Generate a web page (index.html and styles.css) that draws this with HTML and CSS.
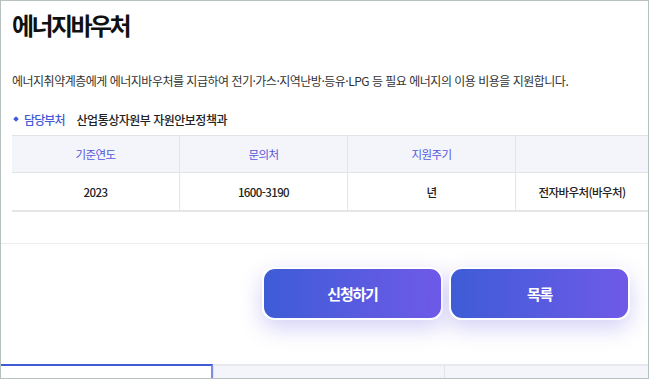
FILE: index.html
```html
<!DOCTYPE html>
<html lang="ko">
<head>
  <meta charset="UTF-8" />
  <meta name="viewport" content="width=device-width, initial-scale=1.0"/>
  <title>에너지바우처</title>
  <link rel="stylesheet" href="styles.css">
</head>
<body>
  <div class="frame">
    <h2 class="title">에너지바우처</h2>

    <p class="desc">에너지취약계층에게 에너지바우처를 지급하여 전기·가스·지역난방·등유·LPG 등 필요 에너지의 이용 비용을 지원합니다.</p>

    <div class="dept">
      <span class="dot"></span>
      <span class="dept-label">담당부처</span>
      <span class="dept-name">산업통상자원부 자원안보정책과</span>
    </div>

    <div class="info">
      <div class="info-row head">
        <div class="cell">기준연도</div>
        <div class="cell">문의처</div>
        <div class="cell">지원주기</div>
        <div class="cell"></div>
      </div>
      <div class="info-row body">
        <div class="cell">2023</div>
        <div class="cell">1600-3190</div>
        <div class="cell">년</div>
        <div class="cell">전자바우처(바우처)</div>
      </div>
    </div>

    <div class="actions">
      <button type="button" class="btn">신청하기</button>
      <button type="button" class="btn">목록</button>
    </div>

    <div class="tabs">
      <div class="tab active"></div>
      <div class="tab"></div>
      <div class="tab"></div>
    </div>
  </div>
</body>
</html>
```

FILE: styles.css
```css
body { margin: 0; background: #fff; font-family: "Noto Sans CJK KR", "Noto Sans", sans-serif; }
.frame { width: 649px; height: 379px; box-sizing: border-box; border: 1px solid #b9c0c0; overflow: hidden; display: flex; flex-direction: column; }
.title { margin: 8px 0 0 11px; font-size: 24px; line-height: 32px; font-weight: 700; letter-spacing: -2.6px; color: #111; }
.desc { margin: 31px 0 0 11px; font-size: 12px; line-height: 18px; letter-spacing: -0.5px; color: #333; }
.dept { margin: 20px 0 0 11px; display: flex; align-items: center; height: 18px; font-size: 12px; letter-spacing: -0.9px; }
.dot { width: 4px; height: 4px; background: #3f5bd6; transform: rotate(45deg); margin: 0 6px 0 2px; }
.dept-label { color: #3f5bd6; font-weight: 500; margin-right: 12px; }
.dept-name { color: #222; font-weight: 500; letter-spacing: -0.5px; }
.info { margin: 7px 0 0 11px; font-size: 11.5px; letter-spacing: -0.6px; }
.info-row { display: grid; grid-template-columns: 167px 168px 168px 1fr; }
.info-row .cell { display: flex; align-items: center; justify-content: center; }
.info-row .cell + .cell { border-left: 1px solid #e4e5ea; }
.head { height: 36px; background: #f4f5fa; border-top: 1px solid #e2e3e8; border-bottom: 1px solid #e2e3e8; color: #5457dc; }
.body { height: 37px; border-bottom: 2px solid #e6e6e9; color: #222; font-weight: 500; }
.actions { margin-top: 31px; border-top: 1px solid #ececef; padding: 23px 18px 0 0; display: flex; justify-content: flex-end; gap: 6px; }
.btn { width: 181px; height: 53px; border: 2px solid #fff; border-radius: 13px; background: linear-gradient(90deg, #3e5cd6, #6f5ae8); color: #fff; font-family: inherit; font-size: 15px; font-weight: 700; letter-spacing: -1.2px; box-shadow: 0 8px 22px rgba(96, 86, 224, 0.28); cursor: pointer; }
.tabs { margin-top: auto; height: 14px; display: flex; }
.tab { box-sizing: border-box; height: 14px; background: #f4f5fa; border-top: 2px solid #e8e9ee; }
.tab:nth-child(1) { width: 212px; }
.tab:nth-child(2) { width: 231px; border-left: 1px solid #e2e3e8; }
.tab:nth-child(3) { flex: 1; border-left: 1px solid #e2e3e8; }
.tab.active { background: #fff; border-top-color: #3f5bd6; border-right: 2px solid #7a8ee6; }
```
